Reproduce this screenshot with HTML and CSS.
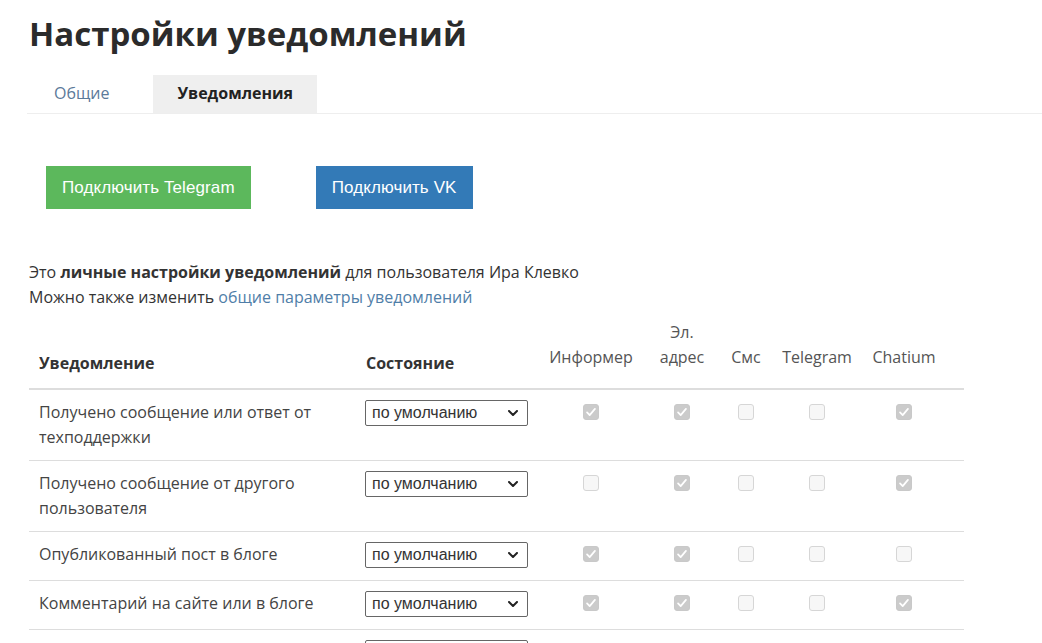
FILE: index.html
```html
<!DOCTYPE html>
<html lang="ru">
<head>
<meta charset="utf-8">
<title>Настройки уведомлений</title>
<link rel="stylesheet" href="styles.css">
</head>
<body>
<div class="page">
  <h1 class="title">Настройки уведомлений</h1>
  <div class="tabs">
    <a class="tab" href="#">Общие</a>
    <span class="tab tab-active">Уведомления</span>
  </div>
  <div class="connect">
    <button class="btn btn-green">Подключить Telegram</button>
    <button class="btn btn-blue">Подключить VK</button>
  </div>
  <p class="info">Это <b>личные настройки уведомлений</b> для пользователя Ира Клевко<br>Можно также изменить <a class="link" href="#">общие параметры уведомлений</a></p>
  <table class="grid">
    <colgroup>
      <col class="c-name"><col class="c-state"><col class="c-inf"><col class="c-mail"><col class="c-sms"><col class="c-tg"><col class="c-chat"><col class="c-end">
    </colgroup>
    <thead>
      <tr>
        <th class="h-main">Уведомление</th>
        <th class="h-main">Состояние</th>
        <th class="h-ch">Информер</th>
        <th class="h-ch">Эл.<br>адрес</th>
        <th class="h-ch">Смс</th>
        <th class="h-ch">Telegram</th>
        <th class="h-ch">Chatium</th>
        <th class="h-end"></th>
      </tr>
    </thead>
    <tbody>
      <tr>
        <td>Получено сообщение или ответ от техподдержки</td>
        <td><div class="sel">по умолчанию<svg class="chev" viewBox="0 0 10 6"><path d="M1 1l4 4 4-4"/></svg></div></td>
        <td class="cc"><span class="cb on"><svg viewBox="0 0 16 16"><path d="M3.5 8.5l3 3 6-7"/></svg></span></td>
        <td class="cc"><span class="cb on"><svg viewBox="0 0 16 16"><path d="M3.5 8.5l3 3 6-7"/></svg></span></td>
        <td class="cc"><span class="cb"></span></td>
        <td class="cc"><span class="cb"></span></td>
        <td class="cc"><span class="cb on"><svg viewBox="0 0 16 16"><path d="M3.5 8.5l3 3 6-7"/></svg></span></td>
        <td></td>
      </tr>
      <tr>
        <td>Получено сообщение от другого пользователя</td>
        <td><div class="sel">по умолчанию<svg class="chev" viewBox="0 0 10 6"><path d="M1 1l4 4 4-4"/></svg></div></td>
        <td class="cc"><span class="cb"></span></td>
        <td class="cc"><span class="cb on"><svg viewBox="0 0 16 16"><path d="M3.5 8.5l3 3 6-7"/></svg></span></td>
        <td class="cc"><span class="cb"></span></td>
        <td class="cc"><span class="cb"></span></td>
        <td class="cc"><span class="cb on"><svg viewBox="0 0 16 16"><path d="M3.5 8.5l3 3 6-7"/></svg></span></td>
        <td></td>
      </tr>
      <tr>
        <td>Опубликованный пост в блоге</td>
        <td><div class="sel">по умолчанию<svg class="chev" viewBox="0 0 10 6"><path d="M1 1l4 4 4-4"/></svg></div></td>
        <td class="cc"><span class="cb on"><svg viewBox="0 0 16 16"><path d="M3.5 8.5l3 3 6-7"/></svg></span></td>
        <td class="cc"><span class="cb on"><svg viewBox="0 0 16 16"><path d="M3.5 8.5l3 3 6-7"/></svg></span></td>
        <td class="cc"><span class="cb"></span></td>
        <td class="cc"><span class="cb"></span></td>
        <td class="cc"><span class="cb"></span></td>
        <td></td>
      </tr>
      <tr>
        <td>Комментарий на сайте или в блоге</td>
        <td><div class="sel">по умолчанию<svg class="chev" viewBox="0 0 10 6"><path d="M1 1l4 4 4-4"/></svg></div></td>
        <td class="cc"><span class="cb on"><svg viewBox="0 0 16 16"><path d="M3.5 8.5l3 3 6-7"/></svg></span></td>
        <td class="cc"><span class="cb on"><svg viewBox="0 0 16 16"><path d="M3.5 8.5l3 3 6-7"/></svg></span></td>
        <td class="cc"><span class="cb"></span></td>
        <td class="cc"><span class="cb"></span></td>
        <td class="cc"><span class="cb on"><svg viewBox="0 0 16 16"><path d="M3.5 8.5l3 3 6-7"/></svg></span></td>
        <td></td>
      </tr>
      <tr>
        <td>Новый заказ</td>
        <td><div class="sel">по умолчанию<svg class="chev" viewBox="0 0 10 6"><path d="M1 1l4 4 4-4"/></svg></div></td>
        <td class="cc"><span class="cb on"><svg viewBox="0 0 16 16"><path d="M3.5 8.5l3 3 6-7"/></svg></span></td>
        <td class="cc"><span class="cb on"><svg viewBox="0 0 16 16"><path d="M3.5 8.5l3 3 6-7"/></svg></span></td>
        <td class="cc"><span class="cb"></span></td>
        <td class="cc"><span class="cb"></span></td>
        <td class="cc"><span class="cb on"><svg viewBox="0 0 16 16"><path d="M3.5 8.5l3 3 6-7"/></svg></span></td>
        <td></td>
      </tr>
    </tbody>
  </table>
</div>
</body>
</html>
```
FILE: styles.css
```css
html, body {
  margin: 0;
  padding: 0;
  background: #fff;
}
body {
  font-family: "Open Sans", "Noto Sans", sans-serif;
  font-size: 16px;
  color: #333;
  overflow: hidden;
}
.page {
  padding: 0 0 0 29px;
}
.title {
  margin: 0;
  padding-top: 12px;
  font-size: 33px;
  line-height: 44px;
  font-weight: 700;
  color: #2b2b2b;
  letter-spacing: 0;
}
.tabs {
  display: flex;
  gap: 19px;
  margin-top: 19px;
  margin-left: -2px;
  border-bottom: 1px solid #eeeeee;
}
.tab {
  display: block;
  height: 38px;
  line-height: 37px;
  padding: 0 25px 0 27px;
  font-size: 16px;
  text-decoration: none;
  color: #5b7a9a;
}
.tab-active {
  padding: 0 24px;
  background: #efefef;
  color: #222;
  font-weight: 700;
}
.connect {
  display: flex;
  gap: 65px;
  margin: 52px 0 0 17px;
}
.btn {
  height: 43px;
  padding: 0 16px;
  border: 0;
  border-radius: 0;
  font-family: "Liberation Sans", Arial, sans-serif;
  font-size: 17px;
  letter-spacing: 0.1px;
  color: #fff;
}
.btn-green { background: #5cb85c; }
.btn-blue { background: #337ab7; }
.info {
  margin: 51px 0 0;
  line-height: 25px;
  color: #333;
}
.info b { font-weight: 700; }
.link {
  color: #4f7ea8;
  text-decoration: none;
}
.grid {
  margin-top: 10px;
  border-collapse: collapse;
  table-layout: fixed;
  width: 935px;
}
.c-name { width: 327px; }
.c-state { width: 182px; }
.c-inf { width: 106px; }
.c-mail { width: 76px; }
.c-sms { width: 52px; }
.c-tg { width: 90px; }
.c-chat { width: 84px; }
.c-end { width: 18px; }
.grid th {
  vertical-align: bottom;
  line-height: 25px;
  border-bottom: 2px solid #dddddd;
}
.h-main {
  text-align: left;
  padding: 10px 10px 12px;
  font-weight: 700;
  color: #333;
}
.h-ch {
  text-align: center;
  padding: 0 0 18px;
  font-weight: 400;
  color: #555;
}
.grid td {
  vertical-align: top;
  padding: 10px;
  line-height: 25px;
  color: #444;
  border-bottom: 1px solid #dddddd;
}
.grid td.cc {
  padding: 14px 0 0;
}
.sel {
  box-sizing: border-box;
  display: flex;
  align-items: center;
  justify-content: space-between;
  width: 163px;
  height: 26px;
  margin: 0 0 2px -1px;
  padding: 0 9px 0 6px;
  border: 1px solid #666;
  border-radius: 2px;
  font-family: "Liberation Sans", Arial, sans-serif;
  font-size: 16px;
  line-height: 24px;
  color: #333;
  background: #fff;
}
.chev {
  width: 10px;
  height: 6px;
  fill: none;
  stroke: #222;
  stroke-width: 2;
  stroke-linecap: round;
  stroke-linejoin: round;
}
.cb {
  box-sizing: border-box;
  display: block;
  margin: 0 auto;
  width: 16px;
  height: 16px;
  border: 1px solid #d6d6d6;
  border-radius: 3px;
  background: #f7f7f7;
}
.cb.on {
  border-color: #c9c9c9;
  background: #cbcbcb;
}
.cb svg {
  display: block;
  width: 14px;
  height: 14px;
  fill: none;
  stroke: #fff;
  stroke-width: 2;
  stroke-linecap: round;
  stroke-linejoin: round;
}
```
